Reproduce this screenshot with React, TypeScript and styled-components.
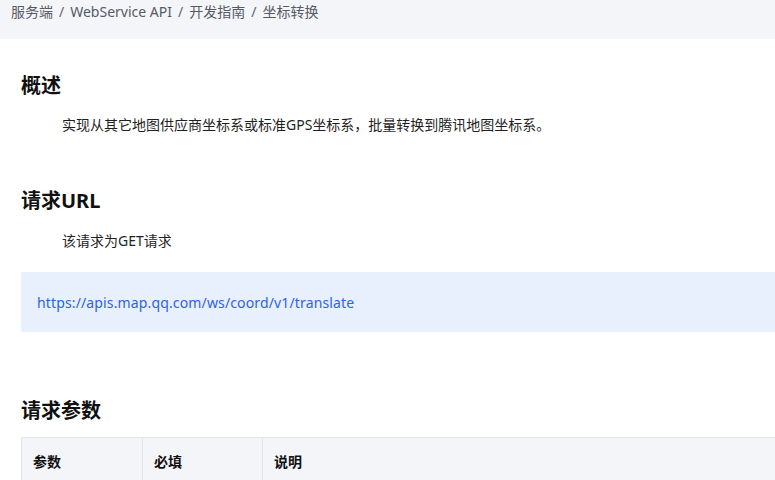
import React from "react";
import styled, { createGlobalStyle } from "styled-components";

const Global = createGlobalStyle`
  html, body { margin: 0; padding: 0; background: #fff; }
  body {
    font-family: "Noto Sans", "Noto Sans CJK SC", sans-serif;
    color: #1f1f1f;
    overflow: hidden;
  }
`;

const Page = styled.div`
  width: 775px;
  height: 480px;
  overflow: hidden;
  display: flex;
  flex-direction: column;
`;

const Breadcrumb = styled.nav`
  height: 39px;
  flex: none;
  box-sizing: border-box;
  background: #f4f5f9;
  padding: 0 11px;
  font-size: 14px;
  line-height: 24px;
  color: #555a66;
  display: flex;
  align-items: flex-start;
  gap: 6px;
`;

const Sep = styled.span`
  color: #666;
`;

const Main = styled.main`
  padding: 0 0 0 21px;
  display: flex;
  flex-direction: column;
`;

const Heading = styled.h2<{ $top: number }>`
  margin: ${(p) => p.$top}px 0 0;
  font-size: 20px;
  line-height: 28px;
  font-weight: 700;
  color: #111;
`;

const Para = styled.p<{ $top: number }>`
  margin: ${(p) => p.$top}px 0 0;
  padding-left: 41px;
  font-size: 14px;
  line-height: 22px;
  color: #1f1f1f;
`;

const CodeBlock = styled.div`
  margin-top: 20px;
  height: 60px;
  box-sizing: border-box;
  padding: 0 16px;
  background: #e9f0fd;
  border-radius: 2px 0 0 2px;
  display: flex;
  align-items: center;
  font-size: 14px;
`;

const Link = styled.a`
  color: #2a62ee;
  text-decoration: none;
  letter-spacing: 0.14px;
`;

const Table = styled.table`
  margin-top: 12px;
  border-collapse: collapse;
  width: 900px;
  font-size: 14px;
`;

const Th = styled.th<{ $w?: number }>`
  width: ${(p) => (p.$w ? `${p.$w}px` : "auto")};
  height: 47px;
  box-sizing: border-box;
  padding: 0 11px;
  text-align: left;
  font-weight: 700;
  color: #111;
  background: #f4f5f9;
  border: 1px solid #e4e5ec;
`;

export default function App() {
  return (
    <Page>
      <Global />
      <Breadcrumb>
        <span>服务端</span>
        <Sep>/</Sep>
        <span>WebService API</span>
        <Sep>/</Sep>
        <span>开发指南</span>
        <Sep>/</Sep>
        <span>坐标转换</span>
      </Breadcrumb>
      <Main>
        <Heading $top={33}>概述</Heading>
        <Para $top={14}>实现从其它地图供应商坐标系或标准GPS坐标系，批量转换到腾讯地图坐标系。</Para>
        <Heading $top={51}>请求URL</Heading>
        <Para $top={15}>该请求为GET请求</Para>
        <CodeBlock>
          <Link href="#">https://apis.map.qq.com/ws/coord/v1/translate</Link>
        </CodeBlock>
        <Heading $top={65}>请求参数</Heading>
        <Table>
          <thead>
            <tr>
              <Th $w={121}>参数</Th>
              <Th $w={120}>必填</Th>
              <Th>说明</Th>
            </tr>
          </thead>
        </Table>
      </Main>
    </Page>
  );
}
